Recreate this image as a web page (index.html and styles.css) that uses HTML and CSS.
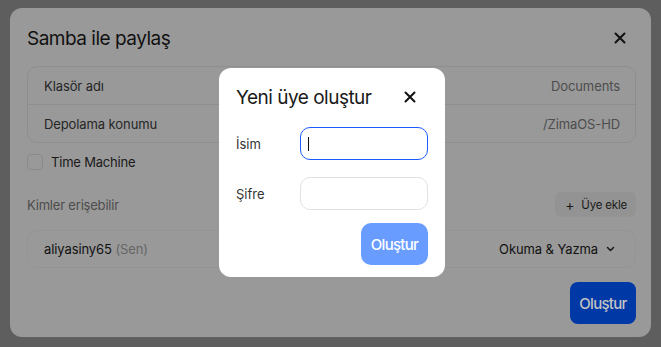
FILE: index.html
```html
<!DOCTYPE html>
<html>
	<head>
		<meta charset="utf-8">
		<title>Samba ile paylaş</title>
		<link rel="stylesheet" href="styles.css">
	</head>
	<body>
		<div class="dialog">
			<div class="dialog-head">
				<h1>Samba ile paylaş</h1>
				<svg class="close" width="12" height="12" viewBox="0 0 12 12"><path d="M1.5 1.5 10.5 10.5M10.5 1.5 1.5 10.5" stroke="#111" stroke-width="2" stroke-linecap="round"/></svg>
			</div>
			<div class="info">
				<div class="info-row"><span>Klasör adı</span><span class="val">Documents</span></div>
				<div class="info-row"><span>Depolama konumu</span><span class="val">/ZimaOS-HD</span></div>
			</div>
			<label class="check"><span class="box"></span>Time Machine</label>
			<div class="access">
				<span class="muted">Kimler erişebilir</span>
				<span class="add-btn"><b>+</b>Üye ekle</span>
			</div>
			<div class="user-row">
				<span>aliyasiny65 <span class="sen">(Sen)</span></span>
				<span class="perm">Okuma &amp; Yazma
					<svg width="9" height="6" viewBox="0 0 9 6"><path d="M1.5 1.5 4.5 4.5 7.5 1.5" fill="none" stroke="#1a1a1a" stroke-width="1.5" stroke-linecap="round" stroke-linejoin="round"/></svg>
				</span>
			</div>
			<div class="foot">
				<span class="btn-main">Oluştur</span>
			</div>
		</div>

		<div class="modal">
			<div class="modal-head">
				<h2>Yeni üye oluştur</h2>
				<svg class="close" width="12" height="12" viewBox="0 0 12 12"><path d="M1.5 1.5 10.5 10.5M10.5 1.5 1.5 10.5" stroke="#111" stroke-width="2" stroke-linecap="round"/></svg>
			</div>
			<div class="field">
				<span>İsim</span>
				<span class="input focus"><i class="caret"></i></span>
			</div>
			<div class="field">
				<span>Şifre</span>
				<span class="input"></span>
			</div>
			<div class="modal-foot">
				<span class="btn-light">Oluştur</span>
			</div>
		</div>
	</body>
</html>
```

FILE: styles.css
```css
body {
	margin: 0;
	padding: 8px 10px;
	background: #5e5e5e;
	font-family: Inter, "Noto Sans", sans-serif;
	color: #111;
}

.dialog {
	width: 641px;
	height: 329px;
	box-sizing: border-box;
	padding: 16px 15px 13px 17px;
	background: #999999;
	border-radius: 12px;
	display: flex;
	flex-direction: column;
}

.dialog-head {
	display: flex;
	justify-content: space-between;
	align-items: center;
	height: 28px;
}

.dialog-head h1 {
	margin: 0;
	font-size: 19px;
	font-weight: 400;
	letter-spacing: -0.5px;
}

.dialog-head .close {
	margin-right: 10px;
}

.info {
	margin-top: 14px;
	border: 1px solid #8e8e8e;
	border-radius: 10px;
}

.info-row {
	height: 37px;
	padding: 0 15px 0 16px;
	display: flex;
	align-items: center;
	justify-content: space-between;
	font-size: 13px;
	letter-spacing: -0.1px;
	color: #262626;
}

.info-row + .info-row {
	border-top: 1px solid #8e8e8e;
}

.info-row .val {
	color: #4d4d4d;
}

.check {
	margin-top: 11px;
	height: 16px;
	display: flex;
	align-items: center;
	gap: 8px;
	font-size: 13px;
	letter-spacing: -0.2px;
	color: #1a1a1a;
}

.check .box {
	width: 14px;
	height: 14px;
	border: 1px solid #8a8a8a;
	border-radius: 4px;
}

.access {
	margin-top: 22px;
	height: 25px;
	display: flex;
	justify-content: space-between;
	align-items: center;
	font-size: 13px;
	letter-spacing: -0.2px;
}

.muted {
	color: #4d4d4d;
}

.add-btn {
	height: 25px;
	padding: 0 9px 0 10px;
	display: flex;
	align-items: center;
	gap: 7px;
	background: #939393;
	border-radius: 6px;
	font-size: 11.5px;
	color: #1a1a1a;
}

.add-btn b {
	font-weight: 400;
	font-size: 14px;
}

.user-row {
	margin-top: 13px;
	height: 38px;
	box-sizing: border-box;
	padding: 0 20px 0 16px;
	border: 1px solid #949494;
	border-radius: 10px;
	display: flex;
	justify-content: space-between;
	align-items: center;
	font-size: 13px;
	letter-spacing: -0.1px;
	color: #111;
}

.sen {
	color: #666;
}

.perm {
	display: flex;
	align-items: center;
	gap: 8px;
}

.foot {
	margin-top: auto;
	display: flex;
	justify-content: flex-end;
}

.btn-main {
	width: 66px;
	height: 42px;
	display: flex;
	align-items: center;
	justify-content: center;
	background: #0038a6;
	color: #c4c4c4;
	border-radius: 8px;
	font-size: 15px;
	font-weight: 500;
	letter-spacing: -0.7px;
}

/* popup over the dialog */
.modal {
	position: absolute;
	left: 219px;
	top: 68px;
	width: 226px;
	height: 209px;
	box-sizing: border-box;
	padding: 15px 17px 12px 17px;
	background: #fff;
	border-radius: 12px;
	display: flex;
	flex-direction: column;
}

.modal-head {
	display: flex;
	justify-content: space-between;
	align-items: center;
	height: 28px;
}

.modal-head h2 {
	margin: 0;
	font-size: 19px;
	font-weight: 400;
	color: #1a1a1a;
	letter-spacing: -0.5px;
}

.modal-head .close {
	margin-right: 12px;
}

.field {
	margin-top: 16px;
	display: flex;
	align-items: center;
	justify-content: space-between;
	font-size: 13px;
	color: #333;
}

.field + .field {
	margin-top: 17px;
}

.input {
	width: 128px;
	height: 33px;
	box-sizing: border-box;
	border: 1px solid #e2e2e2;
	border-radius: 10px;
	display: flex;
	align-items: center;
	padding-left: 7px;
}

.input.focus {
	border-color: #1b5cff;
}

.caret {
	width: 1px;
	height: 14px;
	background: #111;
}

.modal-foot {
	margin-top: auto;
	display: flex;
	justify-content: flex-end;
}

.btn-light {
	width: 67px;
	height: 42px;
	display: flex;
	align-items: center;
	justify-content: center;
	background: #699cff;
	color: #fff;
	border-radius: 10px;
	font-size: 15px;
	font-weight: 500;
	letter-spacing: -0.7px;
}
```
